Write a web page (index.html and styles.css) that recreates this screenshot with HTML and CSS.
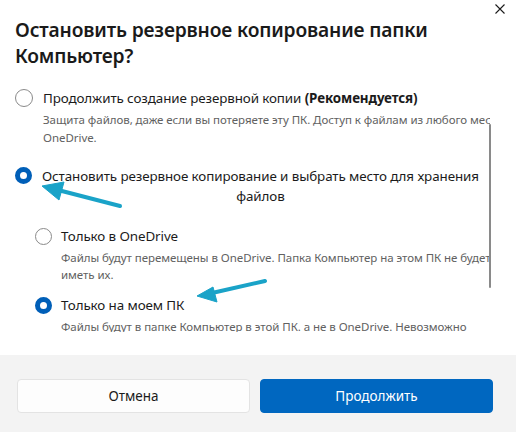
FILE: index.html
```html
<!DOCTYPE html>
<html lang="ru">
<head>
<meta charset="utf-8">
<link rel="stylesheet" href="styles.css">
</head>
<body>
<div class="dialog">
  <button class="close" aria-label="Закрыть">
    <svg width="10" height="10" viewBox="0 0 10 10"><path d="M0.5 0.5 L9.5 9.5 M9.5 0.5 L0.5 9.5" stroke="#1b1b1b" stroke-width="1.1" fill="none"/></svg>
  </button>
  <header class="header">
    <h1 class="title">Остановить резервное копирование папки Компьютер?</h1>
  </header>
  <div class="body">
    <div class="scroll">
      <div class="option opt-1">
        <span class="radio"></span>
        <div class="opt-text">
          <div class="label">Продолжить создание резервной копии <b>(Рекомендуется)</b></div>
          <div class="desc">Защита файлов, даже если вы потеряете эту ПК. Доступ к файлам из любого места через<br>OneDrive.</div>
        </div>
      </div>
      <div class="option opt-2">
        <span class="radio checked"></span>
        <div class="opt-text">
          <div class="label centered">Остановить резервное копирование и выбрать место для хранения<br>файлов</div>
        </div>
      </div>
      <div class="option sub sub-1">
        <span class="radio"></span>
        <div class="opt-text">
          <div class="label">Только в OneDrive</div>
          <div class="desc">Файлы будут перемещены в OneDrive. Папка Компьютер на этом ПК не будет<br>иметь их.</div>
        </div>
      </div>
      <div class="option sub sub-2">
        <span class="radio checked"></span>
        <div class="opt-text">
          <div class="label">Только на моем ПК</div>
          <div class="desc">Файлы будут в папке Компьютер в этой ПК. а не в OneDrive. Невозможно</div>
        </div>
      </div>
    </div>
    <div class="scrollbar"></div>
  </div>
  <footer class="footer">
    <button class="btn btn-secondary">Отмена</button>
    <button class="btn btn-primary">Продолжить</button>
  </footer>
  <svg class="arrows" width="516" height="432" viewBox="0 0 516 432">
    <g fill="#1aa3c8" stroke="#1aa3c8">
      <line x1="120" y1="206" x2="58" y2="190" stroke-width="4" stroke-linecap="round"/>
      <polygon points="42,186 64,182 59,200" stroke-width="1" stroke-linejoin="round"/>
      <line x1="265" y1="281" x2="212" y2="293" stroke-width="4" stroke-linecap="round"/>
      <polygon points="197,296 213,287 217,302" stroke-width="1" stroke-linejoin="round"/>
    </g>
  </svg>
</div>
</body>
</html>
```

FILE: styles.css
```css
* { box-sizing: border-box; }
html, body { margin: 0; padding: 0; background: #ffffff; }
body {
  font-family: "Noto Sans", "Open Sans", "Liberation Sans", sans-serif;
  color: #1b1b1b;
}
.dialog {
  position: relative;
  width: 516px;
  height: 432px;
  display: flex;
  flex-direction: column;
  overflow: hidden;
  background: #ffffff;
}
.close {
  position: absolute;
  top: 3px;
  right: 10px;
  width: 12px;
  height: 12px;
  padding: 0;
  border: 0;
  background: transparent;
  display: flex;
  align-items: center;
  justify-content: center;
}
.header {
  padding: 17px 60px 0 15px;
}
.title {
  margin: 0;
  font-size: 19.2px;
  line-height: 26px;
  font-weight: 600;
  color: #1a1a1a;
  letter-spacing: -0.15px;
}
.body {
  position: relative;
  flex: 1;
  padding-top: 20px;
}
.scroll {
  height: 243px;
  width: 490px;
  overflow: hidden;
  padding-left: 15px;
}
.scrollbar {
  position: absolute;
  left: 489px;
  top: 55px;
  width: 2px;
  height: 164px;
  background: #8a8a8a;
  border-radius: 1px;
}
.option {
  display: flex;
  align-items: flex-start;
  gap: 10px;
  white-space: nowrap;
}
.radio {
  flex: none;
  width: 18px;
  height: 18px;
  border-radius: 50%;
  border: 1px solid #8a8a8a;
  background: #fff;
  margin-top: 0;
}
.radio.checked {
  width: 17px;
  height: 17px;
  margin-top: 1px;
  border: 5px solid #005fb8;
  background: #ffffff;
}
.label {
  font-size: 13.4px;
  line-height: 19px;
  color: #1b1b1b;
  letter-spacing: -0.1px;
}
.label b { font-weight: 700; }
.label.centered { text-align: center; line-height: 20px; }
.desc {
  font-size: 11.5px;
  line-height: 18px;
  color: #616161;
  margin-top: 3px;
  letter-spacing: -0.05px;
}
.opt-2 { margin-top: 19px; }
.sub { padding-left: 20px; gap: 9px; }
.sub .radio { width: 17px; height: 17px; margin-top: 1px; }
.sub-1 { margin-top: 21px; }
.sub-1 .desc { line-height: 17px; }
.sub-2 { margin-top: 13px; }
.sub-2 .desc { margin-top: 3px; }
.footer {
  flex: none;
  height: 77px;
  background: #f3f3f3;
  display: flex;
  gap: 10px;
  padding: 24px 23px 0 17px;
  align-items: flex-start;
}
.btn {
  flex: 1;
  height: 34px;
  border-radius: 4px;
  font-family: inherit;
  font-size: 13.5px;
  cursor: pointer;
}
.btn-secondary {
  background: #fdfdfd;
  border: 1px solid #e3e3e3;
  color: #1b1b1b;
}
.btn-primary {
  background: #0067c0;
  border: 1px solid #0067c0;
  color: #ffffff;
}
.arrows {
  position: absolute;
  left: 0;
  top: 0;
  pointer-events: none;
}
```
